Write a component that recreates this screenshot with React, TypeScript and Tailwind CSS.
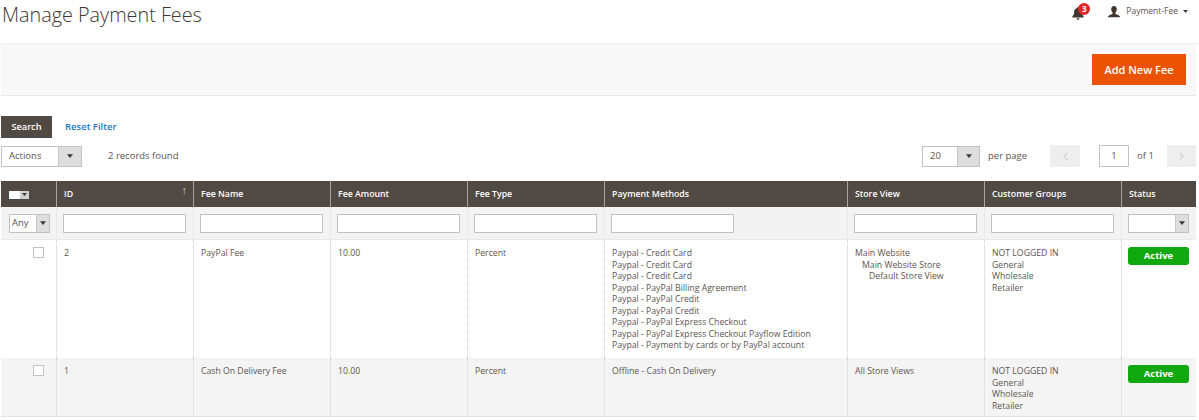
import { ChevronLeft, ChevronRight } from "lucide-react";

const rows = [
  {
    id: "2",
    name: "PayPal Fee",
    amount: "10.00",
    type: "Percent",
    methods: [
      "Paypal - Credit Card",
      "Paypal - Credit Card",
      "Paypal - Credit Card",
      "Paypal - PayPal Billing Agreement",
      "Paypal - PayPal Credit",
      "Paypal - PayPal Credit",
      "Paypal - PayPal Express Checkout",
      "Paypal - PayPal Express Checkout Payflow Edition",
      "Paypal - Payment by cards or by PayPal account",
    ],
    store: [
      { label: "Main Website", cls: "" },
      { label: "Main Website Store", cls: "pl-[7px]" },
      { label: "Default Store View", cls: "pl-[14px]" },
    ],
    rowCls: "bg-white h-[118px]",
  },
  {
    id: "1",
    name: "Cash On Delivery Fee",
    amount: "10.00",
    type: "Percent",
    methods: ["Offline - Cash On Delivery"],
    store: [{ label: "All Store Views", cls: "" }],
    rowCls: "bg-[#f4f4f4] h-[58px]",
  },
];

const groups = ["NOT LOGGED IN", "General", "Wholesale", "Retailer"];
const headers = ["ID", "Fee Name", "Fee Amount", "Fee Type", "Payment Methods", "Store View", "Customer Groups", "Status"];

function Caret({ className }: { className?: string }) {
  return (
    <svg viewBox="0 0 8 5" className={className ?? "w-[6px] h-[4px]"} fill="#41362f">
      <path d="M0 0h8L4 5z" />
    </svg>
  );
}

function SelectBox({ label, className, arrowWidth }: { label: string; className: string; arrowWidth: string }) {
  return (
    <div className={`flex bg-white border border-[#c2c2c2] ${className}`}>
      <span className="flex-1 pl-[7px] flex items-center text-[9.5px] text-[#5c544f]">{label}</span>
      <span className={`flex items-center justify-center bg-[#dedede] border-l border-[#c8c8c8] ${arrowWidth}`}>
        <Caret />
      </span>
    </div>
  );
}

export default function App() {
  return (
    <div className="w-[1199px] h-[420px] overflow-hidden bg-white text-[#5c544f] text-[8.7px] leading-[11.5px] font-['Open_Sans',sans-serif]">
      <header className="h-[44px] flex justify-between border-b border-[#f0f0f0]">
        <h1 className="pl-[2px] pt-[1px] text-[19.8px] leading-[28px] font-light text-[#41362f]">Manage Payment Fees</h1>
        <div className="flex items-start pt-[5px] pr-[11px]">
          <div className="relative w-[14px] h-[14px] mt-[1px] mr-[22px]">
            <svg viewBox="0 0 16 16" className="w-[14px] h-[14px]" fill="#41362f">
              <path d="M8 1.500c.8 0 1.300.5 1.400 1.100C11.600 3.200 12.500 5 12.500 7.200c0 2.500.7 3.500 2 4.800v1H1.500v-1c1.300-1.300 2-2.300 2-4.800C3.500 5 4.400 3.200 6.600 2.600 6.700 2 7.200 1.500 8 1.500zM6.300 14h3.400c0 1-.8 1.700-1.700 1.700S6.300 15 6.300 14z" />
            </svg>
            <span className="absolute left-[7px] -top-[3px] w-[12px] h-[12px] rounded-full bg-[#e22626] text-white text-[8px] leading-[12px] font-bold text-center">3</span>
          </div>
          <svg viewBox="0 0 16 16" className="w-[14px] h-[14px] mr-[5px]" fill="#41362f">
            <path d="M8 1c2 0 3.200 1.500 3.200 3.600 0 1.800-.7 3.200-1.600 4v1.500c.5.8 4.900 1.200 5.400 3.900H1c.5-2.700 4.900-3.100 5.400-3.900V8.600c-.9-.8-1.600-2.200-1.600-4C4.800 2.500 6 1 8 1z" />
          </svg>
          <span className="text-[8.5px] leading-[12px] text-[#5c544f]">Payment-Fee</span>
          <Caret className="w-[5px] h-[3px] ml-[5px] mt-[5px]" />
        </div>
      </header>

      <div className="h-[52px] ml-[1px] mr-[3px] bg-[#f8f8f8] border-b border-[#e6e6e6] flex justify-end items-start pt-[10px] pr-[10px]">
        <button className="w-[94px] h-[31px] bg-[#eb5202] text-white text-[11px] font-semibold">Add New Fee</button>
      </div>

      <div className="flex items-center pl-[1px] mt-[20px] h-[22px]">
        <button className="w-[51px] h-[22px] bg-[#514943] text-white text-[9.2px] font-semibold">Search</button>
        <span className="ml-[13px] text-[9.5px] font-semibold text-[#1979c3]">Reset Filter</span>
      </div>

      <div className="flex items-center h-[22px] mt-[7px] pl-[1px] pr-[3px] text-[9.5px]">
        <SelectBox label="Actions" className="w-[81px] h-[21px]" arrowWidth="w-[23px]" />
        <span className="ml-[26px]">2 records found</span>
        <div className="ml-auto flex items-center">
          <SelectBox label="20" className="w-[58px] h-[21px]" arrowWidth="w-[22px]" />
          <span className="ml-[8px] w-[62px]">per page</span>
          <span className="w-[30px] h-[22px] bg-[#eeeeee] flex items-center justify-center">
            <ChevronLeft className="w-[13px] h-[13px] text-[#b5b5b5]" strokeWidth={1.5} />
          </span>
          <span className="ml-[19px] w-[30px] h-[22px] bg-white border border-[#c2c2c2] flex items-center justify-center">1</span>
          <span className="ml-[8px] w-[30px]">of 1</span>
          <span className="w-[29px] h-[22px] bg-[#eeeeee] flex items-center justify-center">
            <ChevronRight className="w-[13px] h-[13px] text-[#b5b5b5]" strokeWidth={1.5} />
          </span>
        </div>
      </div>

      <table className="mt-[14px] ml-[1px] w-[1195px] table-fixed border-separate [border-spacing:0]">
        <colgroup>
          <col className="w-[56px]" />
          <col className="w-[137px]" />
          <col className="w-[137px]" />
          <col className="w-[137px]" />
          <col className="w-[137px]" />
          <col className="w-[243px]" />
          <col className="w-[137px]" />
          <col className="w-[137px]" />
          <col className="w-[74px]" />
        </colgroup>
        <thead>
          <tr className="h-[26px] bg-[#514943] text-white">
            <th className="border-r border-[#a9a4a0] pl-[8px] pt-[1px] align-middle">
              <div className="flex items-center w-[20px] h-[8px] bg-white">
                <span className="ml-auto w-[9px] h-[8px] bg-[#cfcfcf] flex items-center justify-center">
                  <Caret className="w-[5px] h-[3px]" />
                </span>
              </div>
            </th>
            {headers.map((h, i) => (
              <th
                key={h}
                className={`relative pl-[7px] pt-[2px] text-left text-[8.75px] font-semibold ${i < headers.length - 1 ? "border-r border-[#a9a4a0]" : ""}`}
              >
                {h}
                {h === "ID" && <span className="absolute right-[6px] top-[3px] text-[11px] font-normal text-[#d5d2d0]">↑</span>}
              </th>
            ))}
          </tr>
          <tr className="h-[33px] bg-[#f3f3f3]">
            <td className="pl-[8px] border-r border-b border-[#e8e8e8]">
              <SelectBox label="Any" className="w-[41px] h-[19px] [&>span:first-child]:pl-[2px]" arrowWidth="w-[13px]" />
            </td>
            {headers.slice(0, 7).map((h) => (
              <td key={h} className="pl-[6px] border-r border-b border-[#e8e8e8]">
                <div className="w-[123px] h-[19px] bg-white border border-[#c2c2c2]" />
              </td>
            ))}
            <td className="pl-[6px] border-b border-[#e8e8e8]">
              <SelectBox label="" className="w-[61px] h-[19px]" arrowWidth="w-[13px]" />
            </td>
          </tr>
        </thead>
        <tbody>
          {rows.map((r) => (
            <tr key={r.id} className={`${r.rowCls} align-top`}>
              <td className="border-r border-dotted border-[#cfcfcf] pl-[32px] pt-[7px]">
                <div className="w-[11px] h-[11px] bg-white border border-[#c2c2c2]" />
              </td>
              <td className="border-r border-dotted border-[#cfcfcf] pl-[7px] pt-[8px]">{r.id}</td>
              <td className="border-r border-dotted border-[#cfcfcf] pl-[7px] pt-[8px]">{r.name}</td>
              <td className="border-r border-dotted border-[#cfcfcf] pl-[7px] pt-[8px]">{r.amount}</td>
              <td className="border-r border-dotted border-[#cfcfcf] pl-[7px] pt-[8px]">{r.type}</td>
              <td className="border-r border-dotted border-[#cfcfcf] pl-[7px] pt-[8px]">
                {r.methods.map((m, i) => (
                  <div key={i}>{m}</div>
                ))}
              </td>
              <td className="border-r border-dotted border-[#cfcfcf] pl-[7px] pt-[8px]">
                {r.store.map((s) => (
                  <div key={s.label} className={s.cls}>
                    {s.label}
                  </div>
                ))}
              </td>
              <td className="border-r border-dotted border-[#cfcfcf] pl-[7px] pt-[8px]">
                {groups.map((g) => (
                  <div key={g}>{g}</div>
                ))}
              </td>
              <td className="pl-[6px] pt-[7px]">
                <div className="w-[61px] h-[18px] rounded-[3px] bg-[#10a80e] text-white text-[9.5px] leading-[18px] font-bold text-center">Active</div>
              </td>
            </tr>
          ))}
        </tbody>
      </table>
      <div className="ml-[1px] w-[1195px] border-t border-[#e3e3e3]" />
    </div>
  );
}
